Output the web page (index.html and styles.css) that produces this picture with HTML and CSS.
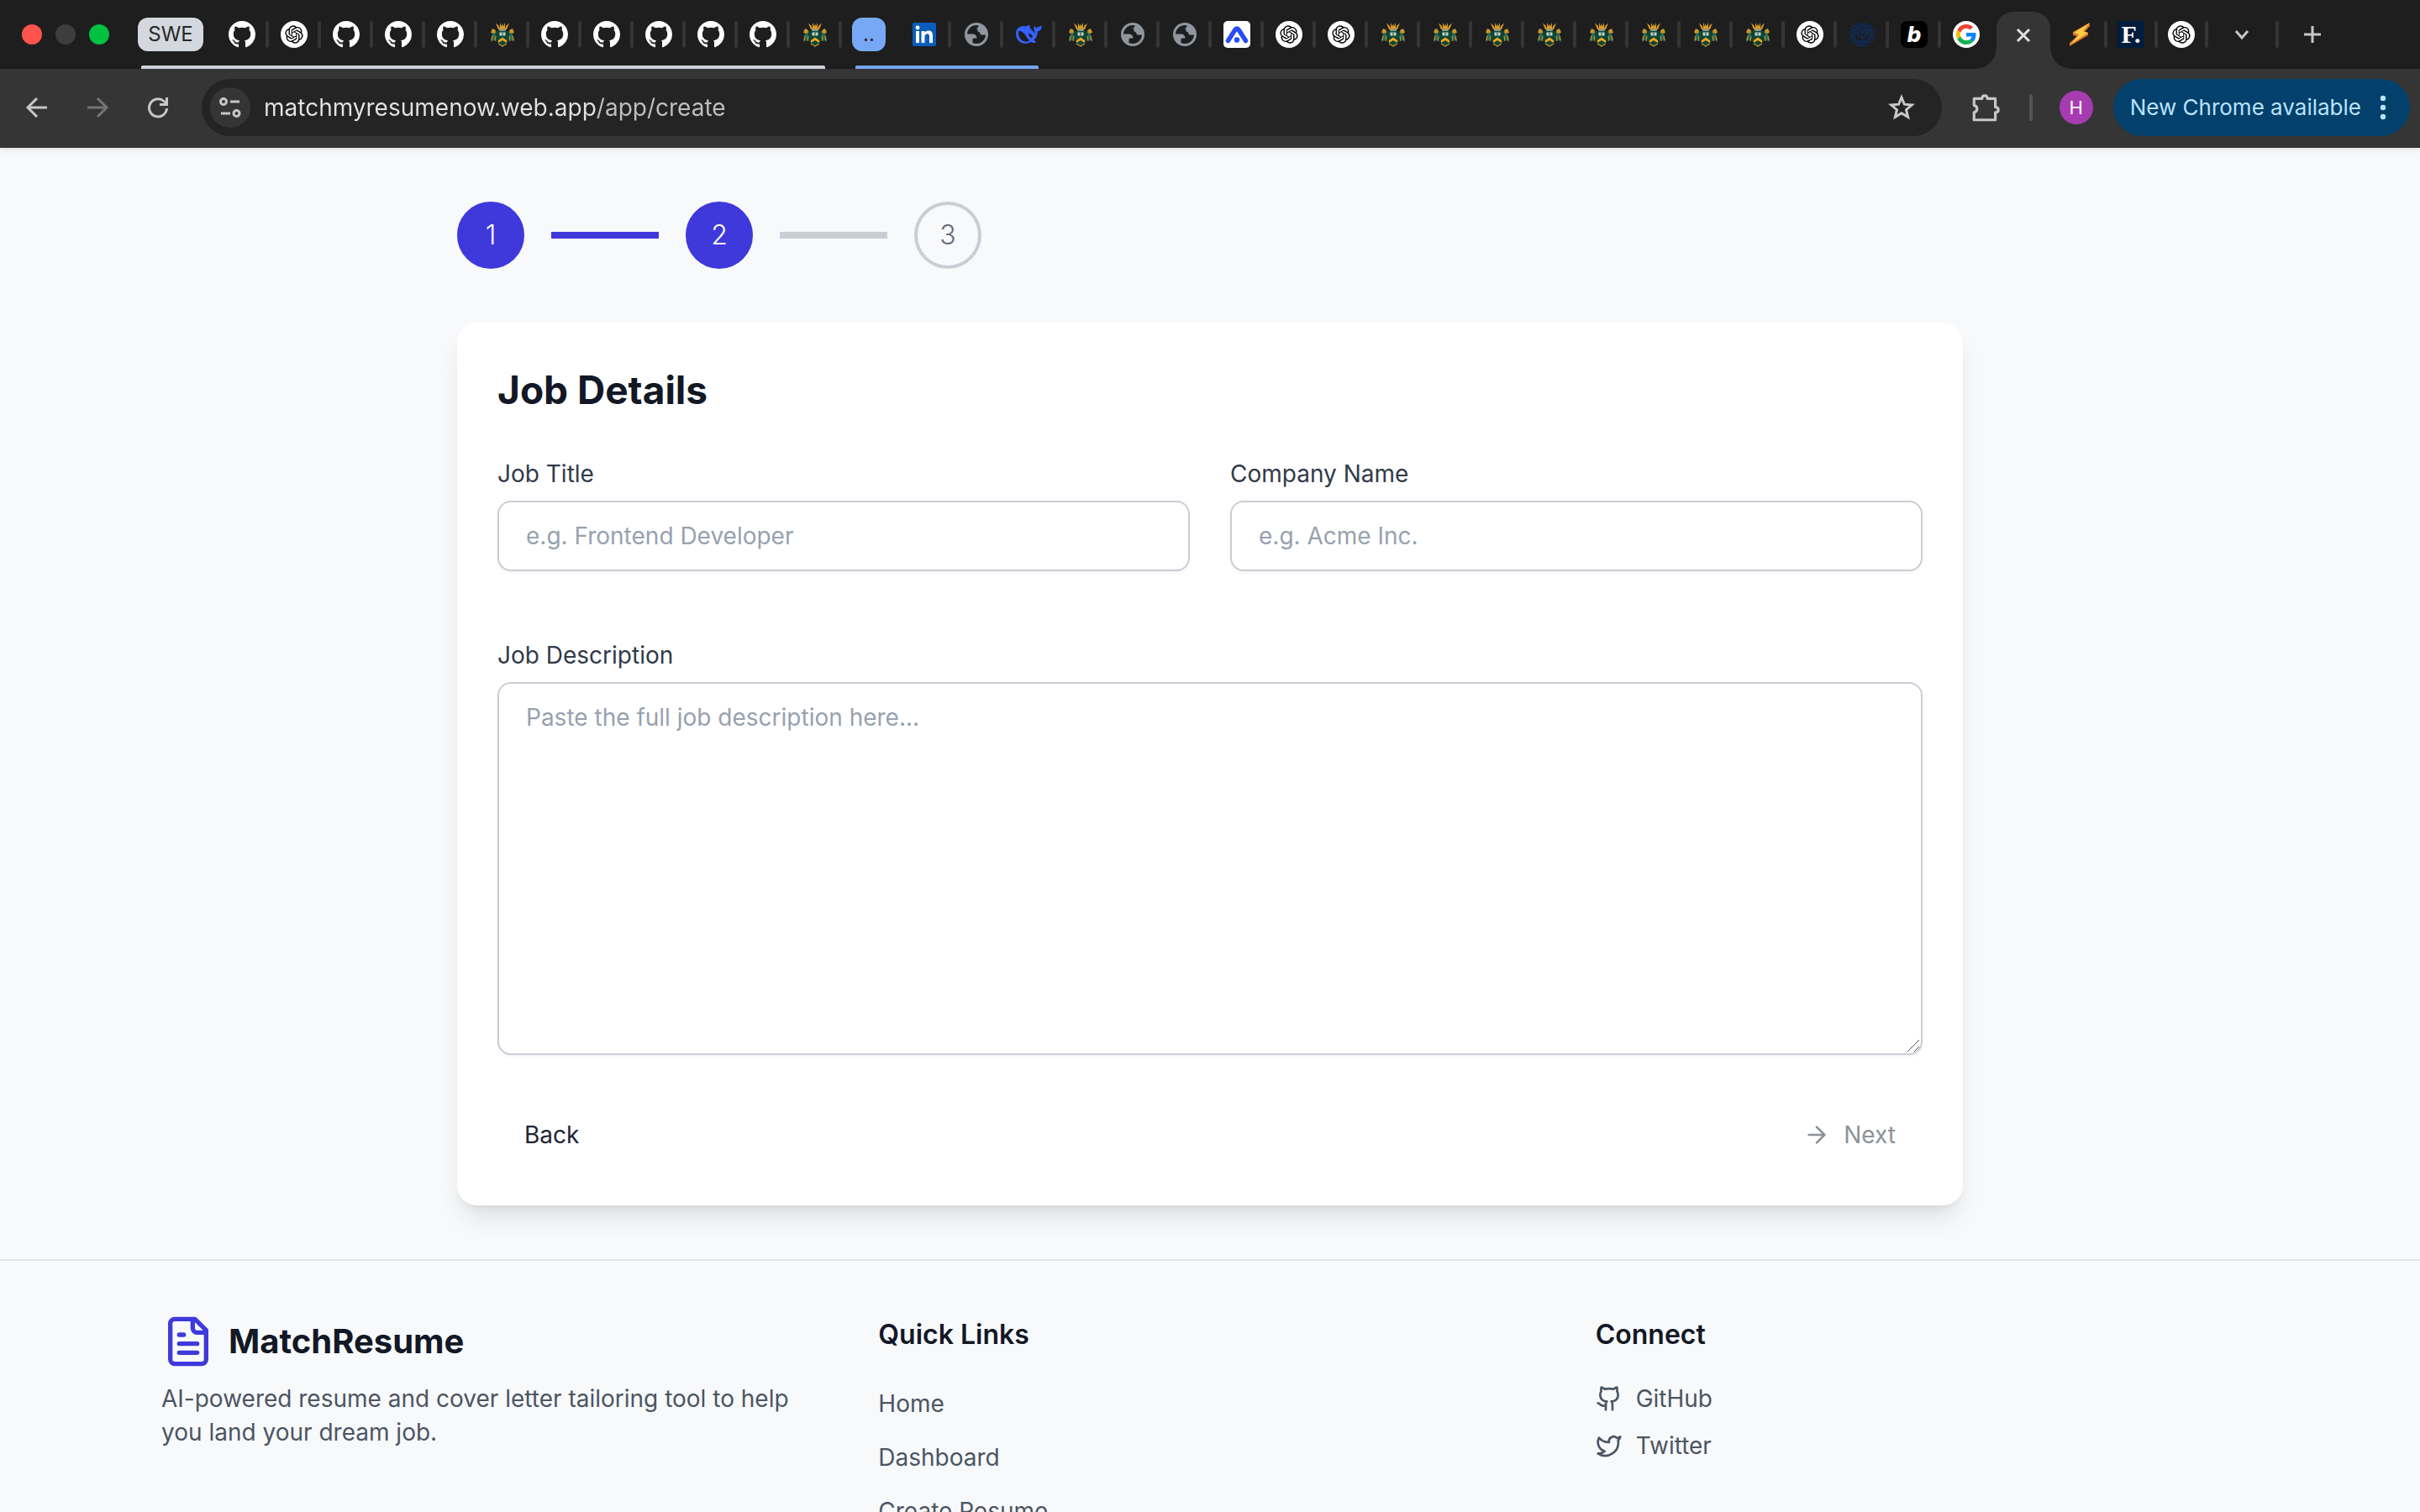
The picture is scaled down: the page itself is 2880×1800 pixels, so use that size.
FILE: index.html
```html
<!DOCTYPE html>
<html lang="en">
<head>
    <meta charset="UTF-8">
    <meta name="viewport" content="width=device-width, initial-scale=1.0">
    <title>MatchResume</title>
    <link rel="stylesheet" href="styles.css">
</head>
<body>
    <!-- Favicon symbols used by the tabs -->
    <svg class="symbols" aria-hidden="true">
        <symbol id="github" viewBox="0 0 16 16">
            <path fill="#fff" d="M8 0C3.58 0 0 3.58 0 8c0 3.54 2.29 6.53 5.47 7.59.4.07.55-.17.55-.38 0-.19-.01-.82-.01-1.49-2.01.37-2.53-.49-2.69-.94-.09-.23-.48-.94-.82-1.13-.28-.15-.68-.52-.01-.53.63-.01 1.08.58 1.23.82.72 1.21 1.87.87 2.33.66.07-.52.28-.87.51-1.07-1.78-.2-3.64-.89-3.64-3.95 0-.87.31-1.59.82-2.15-.08-.2-.36-1.02.08-2.12 0 0 .67-.21 2.2.82.64-.18 1.32-.27 2-.27s1.36.09 2 .27c1.53-1.04 2.2-.82 2.2-.82.44 1.1.16 1.92.08 2.12.51.56.82 1.27.82 2.15 0 3.07-1.87 3.75-3.65 3.95.29.25.54.73.54 1.48 0 1.07-.01 1.93-.01 2.2 0 .21.15.46.55.38A8.01 8.01 0 0 0 16 8c0-4.42-3.58-8-8-8z"/>
        </symbol>
        <symbol id="openai" viewBox="0 0 36 36">
            <circle cx="18" cy="18" r="18" fill="#fff"/>
            <path transform="translate(6 6)" d="M22.2819 9.8211a5.9847 5.9847 0 0 0-.5157-4.9108 6.0462 6.0462 0 0 0-6.5098-2.9A6.0651 6.0651 0 0 0 4.9807 4.1818a5.9847 5.9847 0 0 0-3.9977 2.9 6.0462 6.0462 0 0 0 .7427 7.0966 5.98 5.98 0 0 0 .511 4.9107 6.051 6.051 0 0 0 6.5146 2.9001A5.9847 5.9847 0 0 0 13.2599 24a6.0557 6.0557 0 0 0 5.7718-4.2058 5.9894 5.9894 0 0 0 3.9977-2.9001 6.0557 6.0557 0 0 0-.7475-7.0729zm-9.022 12.6081a4.4755 4.4755 0 0 1-2.8764-1.0408l.1419-.0804 4.7783-2.7582a.7948.7948 0 0 0 .3927-.6813v-6.7369l2.02 1.1686a.071.071 0 0 1 .038.052v5.5826a4.504 4.504 0 0 1-4.4945 4.4944zm-9.6607-4.1254a4.4708 4.4708 0 0 1-.5346-3.0137l.142.0852 4.783 2.7582a.7712.7712 0 0 0 .7806 0l5.8428-3.3685v2.3324a.0804.0804 0 0 1-.0332.0615L9.74 19.9502a4.4992 4.4992 0 0 1-6.1408-1.6464zM2.3408 7.8956a4.485 4.485 0 0 1 2.3655-1.9728V11.6a.7664.7664 0 0 0 .3879.6765l5.8144 3.3543-2.0201 1.1685a.0757.0757 0 0 1-.071 0l-4.8303-2.7865A4.504 4.504 0 0 1 2.3408 7.872zm16.5963 3.8558L13.1038 8.364 15.1192 7.2a.0757.0757 0 0 1 .071 0l4.8303 2.7913a4.4944 4.4944 0 0 1-.6765 8.1042v-5.6772a.79.79 0 0 0-.407-.667zm2.0107-3.0231l-.142-.0852-4.7735-2.7818a.7759.7759 0 0 0-.7854 0L9.409 9.2297V6.8974a.0662.0662 0 0 1 .0284-.0615l4.8303-2.7866a4.4992 4.4992 0 0 1 6.6802 4.66zM8.3065 12.863l-2.02-1.1638a.0804.0804 0 0 1-.038-.0567V6.0742a4.4992 4.4992 0 0 1 7.3757-3.4537l-.142.0805L8.704 5.459a.7948.7948 0 0 0-.3927.6813zm1.0976-2.3654l2.602-1.4998 2.6069 1.4998v2.9994l-2.5974 1.4997-2.6067-1.4997Z"/>
        </symbol>
        <symbol id="crest" viewBox="0 0 32 32">
            <path fill="#d99a26" d="M11 10 8 2.500l3.500 3L13 9l0-7 2 4.500L16 3l1 3.500L19 2v7l1.500-3.500 3.500-3L21 10z"/>
            <path fill="#8d9a88" d="M11.500 9.500h9l-1 2.500h-7z"/>
            <path fill="#0e4636" d="M8 12h16l1 4-1.500 8L16 31l-7.500-7L7 16z"/>
            <path fill="#c9952e" d="m4 9 3.500 1.500L8 14l-3 1.500-3-2zM28 9l-3.500 1.500L24 14l3 1.500 3-2z"/>
            <path fill="#2c6a58" d="m5 14 3 2-1 6-5 3 1-7zM27 14l-3 2 1 6 5 3-1-7z"/>
            <path stroke="#c9952e" stroke-width="1.200" fill="none" d="m4 18-1 5M28 18l1 5M8 18l-1 6M24 18l1 6M11 27l5 3 5-3"/>
            <path fill="#c3d2ca" d="M12.500 13.500h7v4h-7z"/>
            <path stroke="#0e4636" d="M16 13.500v4"/>
            <path fill="#ffa41c" d="m16 19.500 5 3.500v3l-5-3-5 3v-3z"/>
        </symbol>
        <symbol id="globe" viewBox="0 0 32 32">
            <circle cx="16" cy="16" r="12.500" fill="none" stroke="#90969d" stroke-width="3"/>
            <path fill="#90969d" d="M3 15.500h8c3.500 0 5.500 2 5.500 5h-3.500c-1 0-1.500.8-1.500 2v5.500C6 26 3 21 3 15.500zM18.500 3v2.500c0 2-1 3-3 3.500 1 .2 2 .5 2 1.500v2c1.500 0 3 1 3 2.500 0 1 1 1.500 2 1.500h6.500C29 9 24.500 4 18.500 3z"/>
        </symbol>
        <symbol id="whale" viewBox="0 0 32 32">
            <path fill="#3560ff" d="M1 15C1 10 4 6.500 10 6c1.500 0 2.500 0 3.500.5C14.500 5 16.500 4.500 18 6c-1 1.500 0 3 2 5 2 1.800 3.500 3 4.500 3-2-2-2.500-5.500-1.500-9 .8 2 1.500 2.800 3 3 1.500-1.500 3.500-1.500 6-2-.3 3.500-2 6-5 6.500-.5 5-2 8-4.500 10 .8 1.200 1.500 2 3 2.500-2.500 1.500-4.500 1-6.500 0C9 30 1 24 1 15z"/>
            <path fill="#1e1e1e" d="M4 14c0 6 3.500 10 8.500 10.500 2 .3 4-.3 4.500-1.500-3-2-3.500-5-6-8-2-2.500-4.500-3.500-7-3zM16 15c2-.5 4.500 1.500 5 4l-1.500 1.500C18 19.500 16 17.500 16 15z"/>
        </symbol>
        <symbol id="linkedin" viewBox="0 0 32 32">
            <rect x="2" y="2" width="28" height="28" rx="2" fill="#0a5dbb"/>
            <path fill="#fff" d="M6 12h4v14H6zM12.500 12h4v2c1-1.600 2.500-2.400 4.500-2.400 3.800 0 5 2.400 5 6.400v8h-4v-7.400c0-2-.4-3.400-2.300-3.400-2.200 0-3.200 1.400-3.200 3.600V26h-4z"/>
            <circle cx="8" cy="8" r="2.400" fill="#fff"/>
        </symbol>
        <symbol id="apex" viewBox="0 0 32 32">
            <rect width="32" height="32" rx="5" fill="#fff"/>
            <path fill="none" stroke="#2a4cf5" stroke-width="5.500" stroke-linecap="round" stroke-linejoin="round" d="m5.500 23.500 8-12.500q2.500-4 5 0l8 12.500"/>
            <circle cx="16" cy="22.500" r="3.200" fill="#2a4cf5"/>
        </symbol>
        <symbol id="brain" viewBox="0 0 32 32">
            <g fill="none" stroke="#0d2d5c" stroke-width="1.400">
                <path d="M16 2v27M9 29.500h14M14 29c0-4-4-3-8-4s-5-4-3-6M18 29c0-4 4-3 8-4s5-4 3-6"/>
                <path d="M16 25c-4-1-9-1-10-5M16 25c4-1 9-1 10-5M16 20c-3-1-6-2-6-6M16 20c3-1 6-2 6-6M16 14c-2-1-4-3-4-7M16 14c2-1 4-3 4-7"/>
                <circle cx="12" cy="5" r="2"/><circle cx="20" cy="5" r="2"/><circle cx="7" cy="8" r="2.500"/><circle cx="25" cy="8" r="2.500"/>
                <circle cx="10" cy="12" r="2"/><circle cx="22" cy="12" r="2"/><circle cx="4" cy="14" r="2.500"/><circle cx="28" cy="14" r="2.500"/><circle cx="6" cy="19" r="2"/><circle cx="26" cy="19" r="2"/>
            </g>
        </symbol>
        <symbol id="google" viewBox="0 0 36 36">
            <circle cx="18" cy="18" r="18" fill="#fff"/>
            <g transform="translate(4.500 4.500) scale(.5625)">
                <path fill="#ea4335" d="M24 9.500c3.540 0 6.710 1.220 9.210 3.600l6.850-6.850C35.900 2.380 30.470 0 24 0 14.620 0 6.510 5.380 2.560 13.220l7.980 6.190C12.430 13.720 17.740 9.500 24 9.500z"/>
                <path fill="#0a84ff" d="M46.980 24.550c0-1.570-.15-3.090-.38-4.550H24v9.020h12.940c-.58 2.960-2.260 5.480-4.780 7.180l7.730 6c4.510-4.180 7.090-10.360 7.090-17.650z"/>
                <path fill="#fbbc05" d="M10.530 28.590c-.48-1.450-.76-2.990-.76-4.590s.27-3.140.76-4.590l-7.980-6.190C.92 16.460 0 20.120 0 24c0 3.880.92 7.540 2.560 10.780l7.970-6.190z"/>
                <path fill="#18b04b" d="M24 48c6.480 0 11.930-2.130 15.890-5.810l-7.730-6c-2.150 1.450-4.920 2.300-8.160 2.300-6.260 0-11.570-4.220-13.470-9.910l-7.980 6.190C6.510 42.620 14.620 48 24 48z"/>
            </g>
        </symbol>
        <symbol id="bolt" viewBox="0 0 32 32">
            <path fill="#d9772b" d="M27 2v4l-6 7 4 1v3L3 30v-4l9-8-5-1v-4z"/>
            <path fill="#ffcb45" d="M26.500 2.500 19 12l6 2L4 28l10-12-6-2z"/>
        </symbol>
    </svg>

    <div class="browser">
        <div class="tab-strip">
            <div class="lights"><span class="light red"></span><span class="light"></span><span class="light green"></span></div>
            <div class="tab-group">
                <button class="chip">SWE</button>
                <button class="tab" aria-label="Tab"><svg><use href="#github"/></svg></button>
                <button class="tab" aria-label="Tab"><svg><use href="#openai"/></svg></button>
                <button class="tab" aria-label="Tab"><svg><use href="#github"/></svg></button>
                <button class="tab" aria-label="Tab"><svg><use href="#github"/></svg></button>
                <button class="tab" aria-label="Tab"><svg><use href="#github"/></svg></button>
                <button class="tab" aria-label="Tab"><svg><use href="#crest"/></svg></button>
                <button class="tab" aria-label="Tab"><svg><use href="#github"/></svg></button>
                <button class="tab" aria-label="Tab"><svg><use href="#github"/></svg></button>
                <button class="tab" aria-label="Tab"><svg><use href="#github"/></svg></button>
                <button class="tab" aria-label="Tab"><svg><use href="#github"/></svg></button>
                <button class="tab" aria-label="Tab"><svg><use href="#github"/></svg></button>
                <button class="tab" aria-label="Tab"><svg><use href="#crest"/></svg></button>
            </div>
            <div class="tab-group blue">
                <button class="chip">..</button>
                <button class="tab" aria-label="Tab"><svg><use href="#linkedin"/></svg></button>
                <button class="tab" aria-label="Tab"><svg><use href="#globe"/></svg></button>
                <button class="tab" aria-label="Tab"><svg><use href="#whale"/></svg></button>
            </div>
            <button class="tab" aria-label="Tab"><svg><use href="#crest"/></svg></button>
            <button class="tab" aria-label="Tab"><svg><use href="#globe"/></svg></button>
            <button class="tab" aria-label="Tab"><svg><use href="#globe"/></svg></button>
            <button class="tab" aria-label="Tab"><svg><use href="#apex"/></svg></button>
            <button class="tab" aria-label="Tab"><svg><use href="#openai"/></svg></button>
            <button class="tab" aria-label="Tab"><svg><use href="#openai"/></svg></button>
            <button class="tab" aria-label="Tab"><svg><use href="#crest"/></svg></button>
            <button class="tab" aria-label="Tab"><svg><use href="#crest"/></svg></button>
            <button class="tab" aria-label="Tab"><svg><use href="#crest"/></svg></button>
            <button class="tab" aria-label="Tab"><svg><use href="#crest"/></svg></button>
            <button class="tab" aria-label="Tab"><svg><use href="#crest"/></svg></button>
            <button class="tab" aria-label="Tab"><svg><use href="#crest"/></svg></button>
            <button class="tab" aria-label="Tab"><svg><use href="#crest"/></svg></button>
            <button class="tab" aria-label="Tab"><svg><use href="#crest"/></svg></button>
            <button class="tab" aria-label="Tab"><svg><use href="#openai"/></svg></button>
            <button class="tab" aria-label="Tab"><svg><use href="#brain"/></svg></button>
            <button class="tab"><span class="letter-icon letter-b">b</span></button>
            <button class="tab no-line" aria-label="Tab"><svg><use href="#google"/></svg></button>
            <button class="tab-active" aria-label="Close tab">
                <svg viewBox="0 0 20 20"><path d="m3 3 14 14M17 3 3 17"/></svg>
            </button>
            <button class="tab" aria-label="Tab"><svg><use href="#bolt"/></svg></button>
            <button class="tab small"><span class="letter-icon letter-f">F.</span></button>
            <button class="tab small" aria-label="Tab"><svg><use href="#openai"/></svg></button>
            <button class="strip-button" aria-label="Search tabs"><svg viewBox="0 0 24 24"><path d="m5 8 7 8 7-8"/></svg></button>
            <span class="strip-line"></span>
            <button class="strip-button" aria-label="New tab"><svg viewBox="0 0 24 24"><path d="M12 2v20M2 12h20"/></svg></button>
        </div>

        <div class="toolbar">
            <button class="tool" aria-label="Back"><svg viewBox="0 0 32 32"><path d="M28 16H5M16 5 5 16l11 11"/></svg></button>
            <button class="tool dim" aria-label="Forward"><svg viewBox="0 0 32 32"><path d="M4 16h23M16 5l11 11-11 11"/></svg></button>
            <button class="tool" aria-label="Reload"><svg viewBox="0 0 32 32"><path d="M26.500 17A10.500 10.500 0 1 1 23 8.500l3.500 3M26.500 4v8.500H18"/></svg></button>
            <div class="omnibox">
                <button class="site-info" aria-label="Site information">
                    <svg viewBox="0 0 32 32"><circle cx="8" cy="9" r="3.500"/><path d="M16 9h11M5 23h11"/><circle cx="23.500" cy="23" r="3.500"/></svg>
                </button>
                <input class="url" type="text" aria-label="Address" value="matchmyresumenow.web.app/app/create">
                <button class="star" aria-label="Bookmark"><svg viewBox="0 0 32 32"><path d="m16 4 3.400 8.200 8.900.7-6.800 5.800 2.100 8.700L16 22.800l-7.600 4.600 2.100-8.700-6.800-5.800 8.900-.7z"/></svg></button>
            </div>
            <button class="tool extensions" aria-label="Extensions">
                <svg viewBox="0 0 36 36"><path d="M5 8h9c0-4.500 6-4.500 6 0h9v9.500c4.500 0 4.500 6 0 6V32H5v-8.500c4.500-1 4.500-7 0-8z"/></svg>
            </button>
            <span class="tool-line"></span>
            <button class="avatar">H</button>
            <button class="update">New Chrome available
                <svg viewBox="0 0 8 32"><circle cx="4" cy="5" r="3.200"/><circle cx="4" cy="16" r="3.200"/><circle cx="4" cy="27" r="3.200"/></svg>
            </button>
        </div>

        <div class="page">
            <main class="content">
                <ol class="steps">
                    <li class="step done">1</li>
                    <li class="step-line done" aria-hidden="true"></li>
                    <li class="step done">2</li>
                    <li class="step-line" aria-hidden="true"></li>
                    <li class="step">3</li>
                </ol>

                <form class="card">
                    <h2>Job Details</h2>
                    <div class="row">
                        <div class="field">
                            <label for="job-title">Job Title</label>
                            <input type="text" id="job-title" name="jobTitle" placeholder="e.g. Frontend Developer">
                        </div>
                        <div class="field">
                            <label for="company">Company Name</label>
                            <input type="text" id="company" name="company" placeholder="e.g. Acme Inc.">
                        </div>
                    </div>
                    <div class="field description">
                        <label for="description">Job Description</label>
                        <textarea id="description" name="description" placeholder="Paste the full job description here..."></textarea>
                        <svg class="grip" viewBox="0 0 16 16"><path d="M1 15 15 1M9 15l6-6"/></svg>
                    </div>
                    <div class="actions">
                        <button type="button">Back</button>
                        <button type="submit" disabled>
                            <svg viewBox="0 0 24 24"><path d="M5 12h14M12 5l7 7-7 7"/></svg>Next
                        </button>
                    </div>
                </form>
            </main>

            <footer>
                <div class="footer-grid">
                    <div>
                        <div class="brand">
                            <svg viewBox="0 0 24 24"><path d="M15 2H6a2 2 0 0 0-2 2v16a2 2 0 0 0 2 2h12a2 2 0 0 0 2-2V7Z"/><path d="M14 2v4a2 2 0 0 0 2 2h4M10 9H8M16 13H8M16 17H8"/></svg>
                            <span>MatchResume</span>
                        </div>
                        <p>AI-powered resume and cover letter tailoring tool to help you land your dream job.</p>
                    </div>
                    <div>
                        <h3>Quick Links</h3>
                        <ul class="links">
                            <li><a href="#">Home</a></li>
                            <li><a href="#">Dashboard</a></li>
                            <li><a href="#">Create Resume</a></li>
                        </ul>
                    </div>
                    <div>
                        <h3>Connect</h3>
                        <div class="social">
                            <a href="#"><svg viewBox="0 0 24 24"><path d="M15 22v-4a4.800 4.800 0 0 0-1-3.500c3 0 6-2 6-5.500.08-1.250-.27-2.480-1-3.500.28-1.150.28-2.350 0-3.500 0 0-1 0-3 1.500-2.640-.5-5.360-.5-8 0C6 2 5 2 5 2c-.3 1.150-.3 2.350 0 3.500A5.403 5.403 0 0 0 4 9c0 3.500 3 5.500 6 5.500-.39.490-.68 1.050-.85 1.650-.17.600-.22 1.230-.15 1.850v4"/><path d="M9 18c-4.510 2-5-2-7-2"/></svg>GitHub</a>
                            <a href="#"><svg viewBox="0 0 24 24"><path d="M22 4s-.7 2.100-2 3.400c1.600 10-9.400 17.300-18 11.600 2.200.1 4.400-.6 6-2C3 15.500.5 9.600 3 5c2.200 2.600 5.600 4.100 9 4-.9-4.200 4-6.600 7-3.800 1.100 0 3-1.200 3-1.200z"/></svg>Twitter</a>
                        </div>
                    </div>
                </div>
            </footer>
        </div>
    </div>
</body>
</html>
```

FILE: styles.css
```css
* {
    box-sizing: border-box;
}

body {
    margin: 0;
    font-family: Inter, "Liberation Sans", sans-serif;
    font-size: 28px;
    line-height: 40px;
    background-color: #f8f9fb;
}

button, input, textarea {
    font: inherit;
    color: inherit;
    margin: 0;
    padding: 0;
    border: none;
    background: none;
}

button {
    cursor: pointer;
}

svg {
    display: block;
    flex: none;
}

.symbols {
    position: absolute;
    width: 0;
    height: 0;
}

.browser {
    display: flex;
    flex-direction: column;
    height: 100vh;
    overflow: hidden;
}

/* Tab strip */
.tab-strip {
    display: flex;
    align-items: center;
    height: 82px;
    padding-left: 26px;
    background-color: #1e1e1e;
}

.lights {
    display: flex;
    gap: 16px;
    margin-right: 34px;
}

.light {
    width: 24px;
    height: 24px;
    border-radius: 50%;
    background-color: #3d3d3d;
}

.light.red {
    background-color: #ff544d;
}

.light.green {
    background-color: #00c140;
}

.tab-group {
    position: relative;
    display: flex;
    align-items: center;
    height: 82px;
    margin-right: 12px;
}

.tab-group::after {
    content: "";
    position: absolute;
    left: 4px;
    right: 20px;
    bottom: 0;
    height: 4px;
    border-radius: 2px 2px 0 0;
    background-color: #d0d5da;
}

.tab-group.blue {
    margin-right: 0;
}

.tab-group.blue::after {
    background-color: #77a8f5;
}

.chip {
    min-width: 78px;
    height: 40px;
    margin-right: 16px;
    border-radius: 12px;
    font-size: 24px;
    color: #26282b;
    background-color: #d4d7dd;
}

.blue .chip {
    min-width: 40px;
    background-color: #77a8f5;
}

.tab {
    display: flex;
    align-items: center;
    justify-content: space-between;
    width: 62px;
    height: 32px;
    padding-left: 14px;
}

.tab.small {
    width: 60px;
    padding-left: 12px;
}

.tab::after {
    content: "";
    width: 4px;
    height: 32px;
    border-radius: 2px;
    background-color: #353535;
}

.tab.no-line::after {
    visibility: hidden;
}

.tab svg {
    width: 32px;
    height: 32px;
}

.letter-icon {
    width: 32px;
    height: 32px;
    line-height: 32px;
    text-align: center;
    font-weight: 800;
    color: #fff;
}

.letter-b {
    border-radius: 8px;
    font-size: 26px;
    font-style: italic;
    background-color: #000;
}

.letter-f {
    font-family: "Liberation Serif", serif;
    font-size: 30px;
    background-color: #001d3d;
}

.tab-active {
    position: relative;
    display: flex;
    align-items: center;
    justify-content: center;
    align-self: flex-end;
    width: 64px;
    height: 68px;
    margin: 0 6px 0 4px;
    padding-bottom: 12px;
    border-radius: 20px 20px 0 0;
    background-color: #353535;
}

.tab-active::before, .tab-active::after {
    content: "";
    position: absolute;
    bottom: 0;
    width: 24px;
    height: 24px;
}

.tab-active::before {
    right: 100%;
    background: radial-gradient(circle at 0 0, transparent 23px, #353535 24px);
}

.tab-active::after {
    left: 100%;
    background: radial-gradient(circle at 100% 0, transparent 23px, #353535 24px);
}

.tab-active svg {
    width: 20px;
    height: 20px;
    fill: none;
    stroke: #e0e0e0;
    stroke-width: 3;
}

.strip-button {
    display: flex;
    align-items: center;
    justify-content: center;
    width: 80px;
    height: 40px;
}

.strip-button svg {
    width: 24px;
    height: 24px;
    fill: none;
    stroke: #c7c7c7;
    stroke-width: 3;
}

.strip-line {
    width: 4px;
    height: 32px;
    border-radius: 2px;
    background-color: #353535;
}

/* Toolbar */
.toolbar {
    display: flex;
    align-items: center;
    height: 94px;
    padding: 0 12px 2px 8px;
    background: #353535;
    box-shadow: 0 2px 6px rgba(0, 0, 0, 0.1);
    z-index: 1;
}

.tool {
    display: flex;
    align-items: center;
    justify-content: center;
    width: 72px;
    height: 68px;
}

.toolbar svg {
    width: 32px;
    height: 32px;
    fill: none;
    stroke: #c7c7c7;
    stroke-width: 3;
}

.tool.dim svg {
    stroke: #757575;
}

.omnibox {
    display: flex;
    flex: 1;
    align-items: center;
    height: 68px;
    margin: 0 16px;
    padding: 0 32px 0 10px;
    border-radius: 34px;
    background-color: #242424;
}

.site-info {
    display: flex;
    align-items: center;
    justify-content: center;
    width: 48px;
    height: 48px;
    border-radius: 50%;
    background-color: #353535;
}

/* the path is dimmer than the domain */
.url {
    flex: 1;
    margin-left: 16px;
    color: transparent;
    background: linear-gradient(90deg, #e3e3e3 396px, #c0c0c0 396px);
    background-clip: text;
    -webkit-background-clip: text;
}

.toolbar .extensions svg {
    width: 38px;
    height: 38px;
    stroke-linejoin: round;
}

.tool-line {
    width: 4px;
    height: 32px;
    margin: 0 32px 0 16px;
    border-radius: 2px;
    background-color: #555;
}

.avatar {
    width: 40px;
    height: 40px;
    margin-right: 24px;
    border-radius: 50%;
    font-size: 22px;
    color: #fff;
    background-color: #a73bb0;
}

.update {
    display: flex;
    align-items: center;
    gap: 22px;
    height: 68px;
    padding: 0 28px 0 20px;
    border-radius: 34px;
    font-size: 26px;
    color: #b9e3ff;
    background-color: #03406b;
}

.toolbar .update svg {
    width: 8px;
    fill: #b9e3ff;
    stroke: none;
}

/* Page */
.page {
    flex: 1;
    min-height: 0;
    overflow: hidden;
}

.content {
    max-width: 1792px;
    margin: 0 auto;
    padding: 64px 0;
}

.steps {
    display: flex;
    align-items: center;
    gap: 32px;
    margin: 0 0 64px;
    padding: 0;
    list-style: none;
}

.step {
    width: 80px;
    height: 80px;
    border: 4px solid #c9ced5;
    border-radius: 50%;
    font-size: 32px;
    font-weight: 300;
    line-height: 72px;
    text-align: center;
    color: #656d7a;
}

.step.done {
    border-color: #3f39dc;
    color: #fff;
    background-color: #3f39dc;
}

.step-line {
    width: 128px;
    height: 8px;
    background-color: #c9ced5;
}

.step-line.done {
    background-color: #3f39dc;
}

.card {
    padding: 48px;
    border-radius: 24px;
    background-color: #fff;
    box-shadow: 0 20px 30px -6px rgba(0, 0, 0, 0.1), 0 8px 12px -8px rgba(0, 0, 0, 0.1);
}

h2 {
    margin: 0 0 48px;
    font-size: 46px;
    font-weight: 700;
    line-height: 64px;
    color: #121826;
}

.row {
    display: grid;
    grid-template-columns: 1fr 1fr;
    gap: 48px;
    margin-bottom: 80px;
}

.field {
    display: flex;
    flex-direction: column;
    gap: 12px;
}

.field label {
    color: #303a48;
}

.field input, .field textarea {
    width: 100%;
    padding: 20px 32px;
    border: 2px solid #c9ced5;
    border-radius: 16px;
    background-color: #fff;
    box-shadow: 0 2px 4px rgba(0, 0, 0, 0.05);
}

.field input {
    height: 84px;
}

.field textarea {
    display: block;
    height: 444px;
    resize: none;
}

.field ::placeholder {
    color: #98a1af;
}

.description {
    position: relative;
}

.grip {
    position: absolute;
    right: 3px;
    bottom: 3px;
    width: 16px;
    height: 16px;
    fill: none;
    stroke: #555;
    stroke-width: 1;
}

.actions {
    display: flex;
    justify-content: space-between;
    margin-top: 59px;
}

.actions button {
    display: flex;
    align-items: center;
    gap: 16px;
    height: 72px;
    padding: 0 32px;
    color: #1d2635;
}

.actions button:disabled {
    color: #8e9299;
}

.actions svg, .social svg {
    width: 32px;
    height: 32px;
    fill: none;
    stroke: currentColor;
    stroke-width: 2;
    stroke-linecap: round;
    stroke-linejoin: round;
}

/* Footer */
footer {
    padding: 64px 192px;
    border-top: 2px solid #e3e5ec;
    color: #4b5563;
}

.footer-grid {
    display: grid;
    grid-template-columns: repeat(3, 1fr);
    gap: 64px;
    max-width: 2496px;
    margin: 0 auto;
}

.brand {
    display: flex;
    align-items: center;
    gap: 16px;
    margin-bottom: 16px;
    font-size: 40px;
    font-weight: 700;
    color: #121826;
}

.brand svg {
    width: 64px;
    height: 64px;
    fill: none;
    stroke: #3f39dc;
    stroke-width: 2;
    stroke-linecap: round;
    stroke-linejoin: round;
}

footer p {
    margin: 0;
}

h3 {
    margin: 0 0 32px;
    font-size: 32px;
    font-weight: 600;
    line-height: 48px;
    color: #121826;
}

.links {
    display: flex;
    flex-direction: column;
    gap: 12px;
    margin: 0;
    padding: 0;
    line-height: 52px;
    list-style: none;
}

footer a {
    color: inherit;
    text-decoration: none;
}

.social {
    display: flex;
    flex-direction: column;
    gap: 16px;
}

.social a {
    display: flex;
    align-items: center;
    gap: 16px;
}
```
